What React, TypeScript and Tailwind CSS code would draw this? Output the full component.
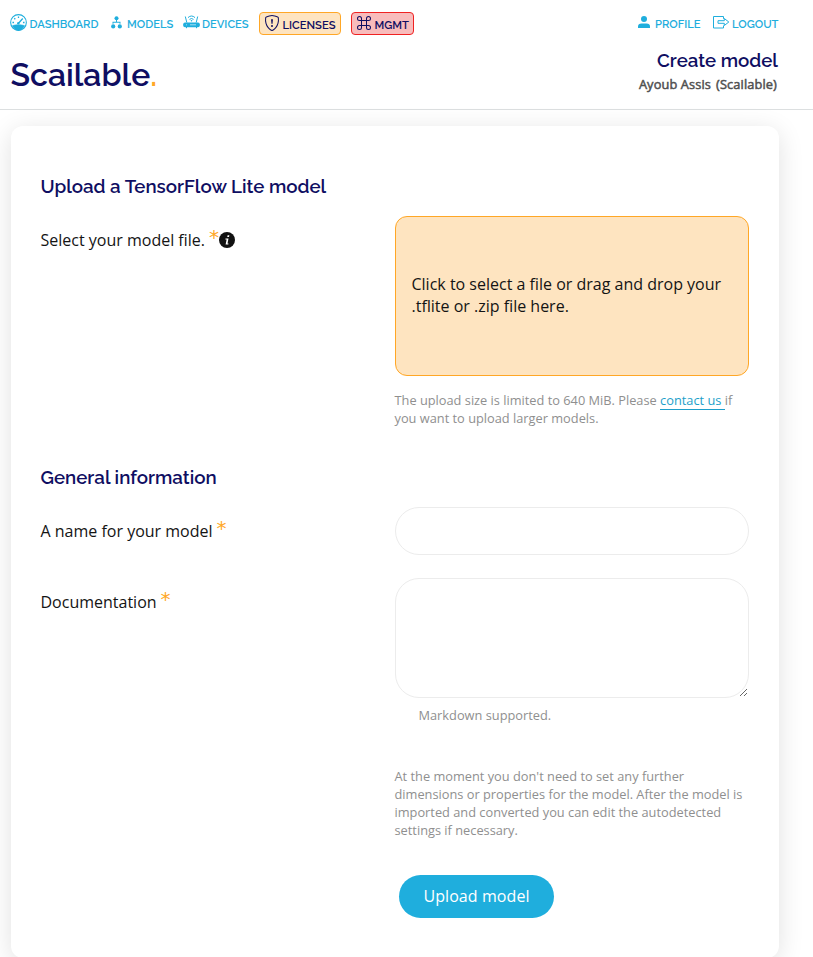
import type { ReactNode } from "react";
import { BsCommand, BsShieldExclamation } from "react-icons/bs";

const heading = "font-['Raleway','Lato',sans-serif] text-[#0f0e62] font-semibold whitespace-nowrap";
const nav = "font-['Raleway','Lato',sans-serif] font-semibold text-[11.200px] leading-4 whitespace-nowrap";

function Gauge() {
  return (
    <svg width="17" height="17" viewBox="0 0 16 16" fill="none" stroke="currentColor">
      <circle cx="8" cy="8" r="7.4" strokeWidth="1" />
      <path d="M2.2 11C5 9.800 11 9.800 13.800 11C12.300 14 10 15.400 8 15.400S3.500 14 2.200 11Z" fill="currentColor" strokeWidth=".5" />
      <path d="M8 2.300v1.500M4 4l1 1M2.300 8h1.500M12.200 8h1.500M8 8.700l4-4.500" strokeWidth="1.200" />
      <circle cx="7.800" cy="8.700" r="1.100" fill="currentColor" stroke="none" />
    </svg>
  );
}

function Nodes() {
  return (
    <svg width="11" height="13" viewBox="0 0 11 13" fill="currentColor">
      <circle cx="5.500" cy="2.300" r="2" />
      <circle cx="2.200" cy="10.400" r="2.100" />
      <circle cx="8.800" cy="10.400" r="2.100" />
      <path d="M5 4h1v1.800h3.500v2h-1v-1h-6v1h-1v-2H5z" />
    </svg>
  );
}

function Router() {
  return (
    <svg width="17" height="14" viewBox="0 0 17 14" fill="none" stroke="currentColor">
      <rect x=".2" y="7.500" width="16.600" height="4.700" rx="1.800" fill="currentColor" stroke="none" />
      <path d="M3.500 12v1.200M13.500 12v1.200M2.300 1.500l1.500 6M14.700 1.500l-1.500 6M5 2.600q3.500-3.200 7 0M6.500 4.400q2-1.800 4 0" />
      <circle cx="8.500" cy="5.800" r=".8" fill="currentColor" stroke="none" />
      <path d="M3 9.800h1M7 9.800h6" stroke="white" strokeWidth=".6" />
    </svg>
  );
}

function Logout() {
  return (
    <svg width="17" height="13" viewBox="0 0 17 13" fill="none" stroke="currentColor">
      <path d="M10.500 2.800V.5H.5v11.500h10V9.500M5 4.700h6.300V2.500L15.800 6l-4.500 3.500V7.300H5z" strokeWidth="1" />
    </svg>
  );
}

function Star() {
  return <span className="-mt-[3px] ml-1 w-[10px] font-['DejaVu_Sans',sans-serif] text-[20px] leading-[22px] text-[#ffa726]">*</span>;
}

function Label({ children }: { children: ReactNode }) {
  return <div className="w-[354px] shrink-0 text-base leading-[22px] whitespace-nowrap">{children}</div>;
}

export default function App() {
  return (
    <div className="h-[957px] w-[813px] overflow-hidden bg-white font-['Open_Sans','Noto_Sans',sans-serif] text-[#141414]">
      <header className="flex h-[110px] justify-between border-b border-[#dcdfe0] pr-[35px] pl-[10px]">
        <div>
          <nav className={`${nav} mt-[12px] flex h-[23px] items-center text-[#1faedd]`}>
            <a className="flex w-[101px] items-center gap-[2.500px]"><span className="-mt-[3px]"><Gauge /></span>DASHBOARD</a>
            <a className="flex w-[72px] items-center gap-[5px]"><span className="-mt-[2px]"><Nodes /></span>MODELS</a>
            <a className="flex w-[76px] items-center gap-[2px]"><span className="-mt-1"><Router /></span>DEVICES</a>
            <a className="flex h-[23px] w-[82px] items-center gap-[2.500px] rounded-[4px] border border-[#ffa726] bg-[#fee4c0] pl-[4px] text-[#0f0e62]"><BsShieldExclamation size={16} className="-mt-[2px]" /><span className="pt-[2px]">LICENSES</span></a>
            <a className="ml-[10px] flex h-[23px] w-[63px] items-center gap-[2.500px] rounded-[4px] border border-[#ef2222] bg-[#f8bcbc] pl-[4px] text-[#0f0e62]"><BsCommand size={16} className="-mt-[2px]" /><span className="pt-[2px]">MGMT</span></a>
          </nav>
          <div className={`${heading} mt-[18px] ml-[.500px] text-[32px] leading-[44px]`}>Scailable<span className="text-[#ffa726]">.</span></div>
        </div>
        <div className="flex flex-col items-end">
          <nav className={`${nav} mt-[12px] flex h-[23px] items-center text-[#1faedd]`}>
            <a className="flex w-[75px] items-center gap-[5px]">
              <svg width="12" height="12" viewBox="0 0 12 12" fill="currentColor" className="-mt-1"><circle cx="6" cy="3" r="3" /><path d="M0 12V10.500Q0 7.500 3.500 7.500h5Q12 7.500 12 10.500V12z" /></svg>PROFILE
            </a>
            <a className="flex w-[65px] items-center gap-[2px]"><span className="-mt-[2px]"><Logout /></span>LOGOUT</a>
          </nav>
          <div className={`${heading} mt-[13px] text-[18.720px] leading-6`}>Create model</div>
          <div className="mt-[3px] mr-px flex gap-[5px] text-[12.800px] leading-[18px] tracking-[0.120px] whitespace-nowrap text-[#505050] [-webkit-text-stroke:0.500px_#505050]"><span>Ayoub Assis</span><span>(Scailable)</span></div>
        </div>
      </header>
      <main className="mt-4 ml-[11px] h-[832px] w-[768px] rounded-[12px] bg-white pt-[48px] pl-[29.500px] shadow-[0_5px_26px_rgba(0,0,0,0.12)]">
        <h2 className={`${heading} text-[18.720px] leading-6`}>Upload a TensorFlow Lite model</h2>
        <section className="mt-[18px] flex h-[213px]">
          <Label><div className="flex pt-[13px]">Select your model file.<Star />
            <svg width="16" height="16" viewBox="0 0 16 16" className="mt-[3px]"><circle cx="8" cy="8" r="8" fill="#111" /><path d="M8.600 3.200h1.800L10 5H8.200zM6.500 6.500h3L8.500 11.500h1l-.2 1H6.600l1-5H6.300z" fill="white" /></svg>
          </div></Label>
          <div>
            <div className="flex h-[160px] w-[354px] items-center rounded-[12px] border border-[#ffa726] bg-[#fee4c0] px-4 pb-[2px] text-base leading-[22px]"><span>Click to select a file or drag and drop your<br />.tflite or .zip file here.</span></div>
            <p className="mt-[15px] w-[354px] text-[12.800px] leading-[18px] text-[#8f8f8f]">The upload size is limited to 640 MiB. Please <a className="border-b border-[#1d9fca] text-[#1d9fca]">contact us </a>if<br />you want to upload larger models.</p>
          </div>
        </section>
        <h2 className={`${heading} mt-[36px] text-[18.720px] leading-6`}>General information</h2>
        <section className="mt-[18px] flex h-[71px]">
          <Label><div className="flex pt-[13px]">A name for your model<Star /></div></Label>
          <input aria-label="A name for your model" className="h-[48px] w-[354px] rounded-[24px] border border-[#ececec] px-6 outline-none" />
        </section>
        <section className="flex h-[189px]">
          <Label><div className="flex pt-[13px]">Documentation<Star /></div></Label>
          <div>
            <textarea aria-label="Documentation" className="block h-[120px] w-[354px] resize rounded-[24px] border border-[#ececec] px-6 outline-none" />
            <p className="mt-[8px] ml-6 text-[12.800px] leading-[18px] text-[#8f8f8f]">Markdown supported.</p>
          </div>
        </section>
        <div className="ml-[354px]">
          <p className="text-[12.800px] leading-[18px] whitespace-nowrap text-[#8f8f8f]">At the moment you don't need to set any further<br />dimensions or properties for the model. After the model is<br />imported and converted you can edit the autodetected<br />settings if necessary.</p>
          <button className="mt-[36px] ml-[4.500px] h-[43px] w-[155px] rounded-[22px] bg-[#1faedd] pb-[2px] text-base font-medium tracking-[0.08px] text-white">Upload model</button>
        </div>
      </main>
    </div>
  );
}
